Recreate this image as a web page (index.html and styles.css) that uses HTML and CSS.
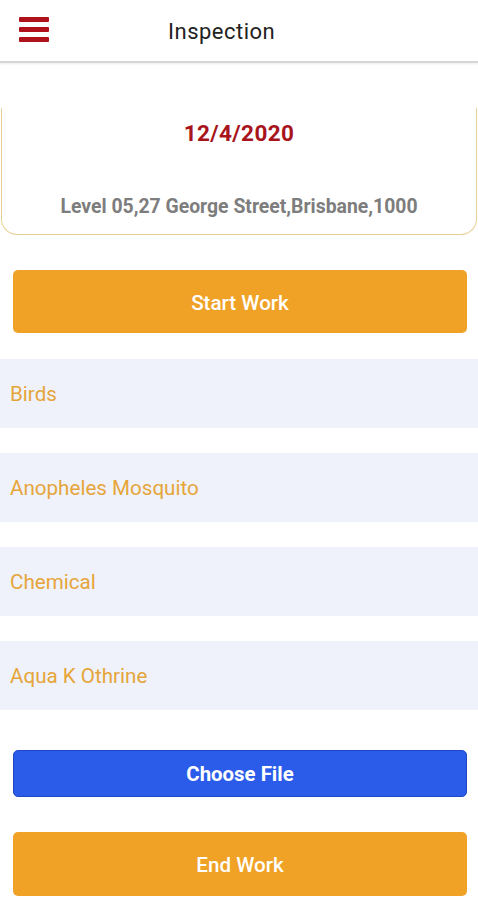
FILE: index.html
```html
<!DOCTYPE html>
<html>
<head>
<meta charset="utf-8">
<link rel="stylesheet" href="styles.css">
</head>
<body>
<header class="topbar">
  <div class="menu" aria-label="menu">
    <span></span><span></span><span></span>
  </div>
  <div class="title">Inspection</div>
</header>
<main class="content">
  <section class="card">
    <div class="date">12/4/2020</div>
    <div class="address">Level 05,27 George Street,Brisbane,1000</div>
  </section>
  <button class="btn btn-orange start">Start Work</button>
  <ul class="list">
    <li class="row">Birds</li>
    <li class="row">Anopheles Mosquito</li>
    <li class="row">Chemical</li>
    <li class="row">Aqua K Othrine</li>
  </ul>
  <button class="btn btn-blue choose">Choose File</button>
  <button class="btn btn-orange end">End Work</button>
</main>
</body>
</html>
```
FILE: styles.css
```css
* { box-sizing: border-box; }
html, body { margin: 0; padding: 0; background: #fff; }
body {
  width: 478px;
  height: 900px;
  overflow: hidden;
  font-family: Roboto, "Noto Sans", "Liberation Sans", sans-serif;
}
.topbar {
  height: 63px;
  display: flex;
  align-items: center;
  border-bottom: 2px solid #d6d6d6;
  box-shadow: 0 1px 2px rgba(0,0,0,0.08);
  position: relative;
}
.menu {
  width: 30px;
  margin-left: 19px;
  display: flex;
  flex-direction: column;
  gap: 5px;
  margin-top: -2px;
}
.menu span {
  display: block;
  height: 5px;
  background: #b0121b;
  border-radius: 1px;
}
.title {
  margin-left: 119px;
  font-size: 22px;
  color: #222;
  letter-spacing: 0.5px;
  padding-top: 1px;
}
.content {
  display: flex;
  flex-direction: column;
}
.card {
  margin: 45px 1px 0 1px;
  height: 127px;
  border: 1px solid #e8cf95;
  border-top: none;
  border-radius: 0 0 16px 16px;
  display: flex;
  flex-direction: column;
  align-items: center;
}
.date {
  margin-top: 12px;
  font-size: 22.5px;
  font-weight: 700;
  color: #a8141b;
  letter-spacing: 0.4px;
}
.address {
  margin-top: 49px;
  font-size: 19.4px;
  font-weight: 700;
  color: #7d7d7d;
}
.btn {
  display: flex;
  align-items: center;
  justify-content: center;
  margin: 0 11px 0 13px;
  border: none;
  border-radius: 5px;
  color: #fff;
  font-family: Roboto, "Noto Sans", "Liberation Sans", sans-serif;
  font-size: 20.6px;
  font-weight: 500;
  padding: 0;
}
.btn-orange { background: #f0a226; }
.btn-blue { background: #2a5ce9; border: 1px solid #1f47c2; font-weight: 700; font-size: 20.4px; }
.start { margin-top: 35px; height: 63px; padding-top: 3px; }
.list {
  list-style: none;
  margin: 26px 0 0 0;
  padding: 0;
  display: flex;
  flex-direction: column;
  gap: 25px;
}
.row {
  height: 69px;
  background: #eff2fa;
  display: flex;
  align-items: center;
  padding-left: 10px;
  font-size: 20.6px;
  color: #e6a53a;
  padding-top: 1px;
}
.choose { margin-top: 40px; height: 47px; }
.end { margin-top: 35px; height: 64px; padding-top: 2px; }
```
